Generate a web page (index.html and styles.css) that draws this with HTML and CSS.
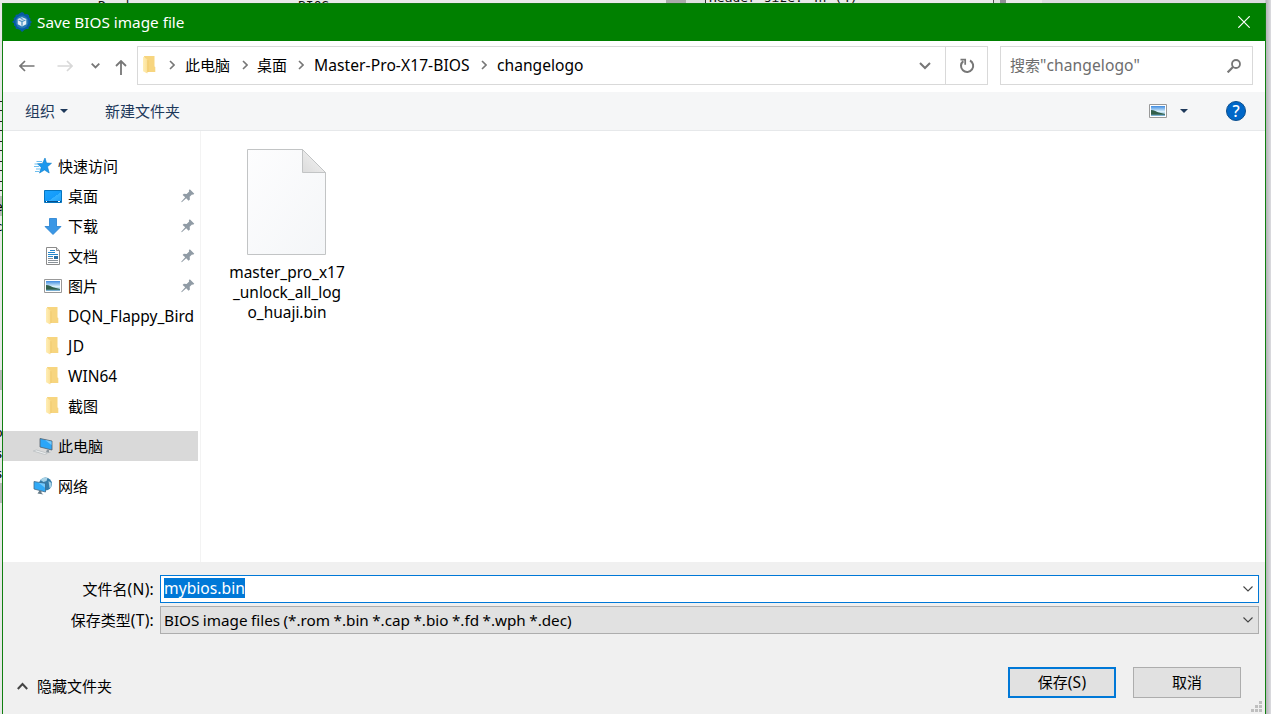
FILE: index.html
```html
<!DOCTYPE html>
<html lang="zh-CN">
<head>
<meta charset="utf-8">
<title>Save BIOS image file</title>
<link rel="stylesheet" href="styles.css">
</head>
<body>
<svg class="defs" width="0" height="0">
  <defs>
    <linearGradient id="foldg" x1="0" x2="1" y1="0" y2="0"><stop offset="0" stop-color="#ffeeb5"/><stop offset="1" stop-color="#fbe098"/></linearGradient>
    <linearGradient id="sky" x1="0" x2="0" y1="0" y2="1"><stop offset="0" stop-color="#3f8be0"/><stop offset=".55" stop-color="#d9f0fb"/><stop offset="1" stop-color="#6fa9cf"/></linearGradient>
    <linearGradient id="scr" x1="0" x2="1" y1="0" y2="1"><stop offset="0" stop-color="#1ea5ff"/><stop offset=".55" stop-color="#139bfa"/><stop offset=".56" stop-color="#35b2ff"/><stop offset="1" stop-color="#169cf8"/></linearGradient>
    <linearGradient id="page" x1="0" x2="1" y1="0" y2="1"><stop offset="0" stop-color="#fdfdfe"/><stop offset="1" stop-color="#f4f6f8"/></linearGradient>
    <linearGradient id="curl" x1="0" x2="1" y1="1" y2="0"><stop offset="0" stop-color="#dcdcdc"/><stop offset="1" stop-color="#f5f5f5"/></linearGradient>
    <symbol id="folder" viewBox="0 0 13 18"><path fill="#f7d57f" d="M1 0h10.500v10.500l.8.500v5H4z"/><path fill="#eec765" d="M4.300 4v12.500l1-.5V4.500z"/><path fill="url(#foldg)" d="M0 .8 4.300 3.300V17.500L0 15.200z"/></symbol>
    <symbol id="picture" viewBox="0 0 18 14"><path fill="#fff" stroke="#999" d="M.5.5h17v13H.5z"/><path fill="url(#sky)" d="M2 2h14v10H2z"/><path fill="#315f4b" d="M2 6c3 0 6 2 8 2.500l6 1.500v.800H2z"/></symbol>
    <symbol id="pin" viewBox="0 0 14 14"><path fill="#909ba5" d="M8.800.3 13.300 4.800l-1.300.9-1-.3-2.300 2.400.2 2.700-1.300 1.300L5.200 9.300.8 13.300.2 12.800 4.200 8.200 1.600 5.900l1.300-1.200 2.700.2L8.200 2.600l-.4-1.100z"/></symbol>
    <symbol id="crumb" viewBox="0 0 6 10"><path fill="none" stroke="#777" stroke-width="1.600" d="m1 1 4 4-4 4"/></symbol>
  </defs>
</svg>
<div class="behind">
  <div class="behind-top">
    <span class="peek peek-a">Read</span><span class="peek peek-b">BIOS</span>
    <span class="peek-pane"></span><span class="peek peek-c">Header size: 4h (4)</span><span class="peek-bar"></span>
  </div>
  <div class="behind-left"><i class="edge e1"></i><i class="edge e2"></i><i class="edge e3"></i><i class="edge e4"></i><i class="edge e5"></i><b class="block b1"></b><b class="block b2"></b><b class="block b3"></b>
    <span class="bit t1">e</span><span class="bit t2">c</span><span class="bit t3">o</span><span class="bit t4">s</span><span class="bit t5">s</span></div>
</div>
<main class="dialog">
  <header class="titlebar">
    <svg class="app-icon" width="20" height="20" viewBox="0 0 20 20"><path fill="#065aa5" d="m8 1 2-1 2 1 .6 1.600L15 2l2 1.200.2 2.300 1.300 1-.3 2L20 10l-1.700 1.500.3 2.200-1.800 1-.3 2.200-2.300.1-1.500.8L10 20l-1.800-1.900-2-.8-2.400-.5-.3-2.300-1.600-1 .3-2L0 10l2-1.700-.4-2.200L3.300 5 3.800 2.700 6 2.500z"/><circle cx="10" cy="10" r="6.500" fill="#2478b4"/><path fill="#e6f0f7" d="m10 5.200 4.300 1.800v5.300L10 14.500l-4.300-2.200V7z"/><path fill="none" stroke="#4e94c4" stroke-width="1.300" d="m6.500 8 3.500 1.500L13.500 8M10 9.500v4.300M8.500 6.300l3 1.200"/></svg>
    <h1>Save BIOS image file</h1>
    <svg class="close" width="12" height="12" viewBox="0 0 12 12"><path stroke="#fff" stroke-width="1.200" d="m.3.3 11.400 11.400M11.700.3.3 11.700"/></svg>
  </header>
  <nav class="navbar">
    <div class="history">
      <svg width="16" height="12" viewBox="0 0 16 12"><path fill="none" stroke="#777" stroke-width="1.700" d="M15.500 6H1m5-5L1 6l5 5"/></svg>
      <svg width="16" height="12" viewBox="0 0 16 12"><path fill="none" stroke="#d8d8d8" stroke-width="1.700" d="M.5 6H15m-5-5 5 5-5 5"/></svg>
      <svg width="9" height="6" viewBox="0 0 9 6"><path fill="none" stroke="#777" stroke-width="1.800" d="m.7.7 3.800 3.800L8.300.7"/></svg>
      <svg class="up" width="12" height="15" viewBox="0 0 12 15"><path fill="none" stroke="#777" stroke-width="1.800" d="M6 15V1M1 6l5-5 5 5"/></svg>
    </div>
    <div class="address">
      <svg class="addr-folder" width="13" height="18"><use href="#folder"/></svg>
      <svg class="crumb c1" width="6" height="10"><use href="#crumb"/></svg><span class="up1">此电脑</span>
      <svg class="crumb" width="6" height="10"><use href="#crumb"/></svg><span class="up1">桌面</span>
      <svg class="crumb c3" width="6" height="10"><use href="#crumb"/></svg><span class="latin w-master up1">Master-Pro-X17-BIOS</span>
      <svg class="crumb c4" width="6" height="10"><use href="#crumb"/></svg><span class="latin up1">changelogo</span>
      <svg class="drop" width="12" height="8" viewBox="0 0 12 8"><path fill="none" stroke="#777" stroke-width="2" d="m1 1 5 5 5-5"/></svg>
      <div class="refresh"><svg width="16" height="16" viewBox="0 0 16 16"><path fill="none" stroke="#777" stroke-width="2" d="M11 2.500A6.100 6.100 0 1 1 4.300 3.100"/><path fill="none" stroke="#777" stroke-width="1.700" d="M1.500 1.700h4.700v5"/></svg></div>
    </div>
    <div class="search"><span class="up1">搜索<span class="latin w-search">"changelogo"</span></span>
      <svg width="14" height="14" viewBox="0 0 14 14"><circle cx="9" cy="5" r="4" fill="none" stroke="#777" stroke-width="1.800"/><path stroke="#777" stroke-width="2.200" d="m6 8-5.400 5.400"/></svg></div>
  </nav>
  <div class="toolbar">
    <span>组织</span><i class="tri"></i><span class="newdir">新建文件夹</span>
    <svg class="view" width="18" height="14"><use href="#picture"/></svg><i class="tri tri-view"></i><b class="help">?</b>
  </div>
  <section class="content">
    <aside class="sidebar">
      <div class="row root"><svg width="18" height="16" viewBox="0 0 18 16"><path fill="#1b98ee" stroke="#0b7cc8" stroke-width=".6" d="m11 0 1.500 5 5 .3-4 3.400 1.700 6.300L10.500 12 5.500 15l1.700-5.500L3.500 5.700l5-.3z"/><path stroke="#4aaeea" stroke-width=".8" d="M2.500 3.500H8M.5 6h4M0 8.500h5M2 11h4M1 13.500h4"/></svg><span>快速访问</span></div>
      <div class="row"><svg width="18" height="13" viewBox="0 0 18 13"><path fill="url(#scr)" stroke="#0675bf" d="M.5.5h17v12H.5z"/><path stroke="#064f8c" d="M1 11.500h16"/><path stroke="#fff" d="M2 11.500h1M14 11.500h2"/></svg><span>桌面</span><svg class="pin" width="14" height="14"><use href="#pin"/></svg></div>
      <div class="row"><svg width="18" height="17" viewBox="0 0 18 17"><path fill="#3b97e5" stroke="#227dcf" stroke-width=".8" d="M5.500.5h7v8H17L9 16.500 1 8.500h4.500z"/></svg><span>下载</span><svg class="pin" width="14" height="14"><use href="#pin"/></svg></div>
      <div class="row"><svg width="18" height="18" viewBox="0 0 18 18"><path fill="#fff" stroke="#8b8b8b" d="M2.500.5h10l3 3v14h-13z"/><path fill="#e4e4e4" stroke="#8b8b8b" d="M12.500.5v3h3"/><path stroke="#2588cc" d="M6 3.500h5M4 5.500h7M4 7.500h10M4 9.500h5"/><path stroke="#8a9299" d="M4 11.500h5M4 13.500h10M4 15.500h10"/><path fill="#276fa2" d="M10 9h4v3h-4z"/></svg><span>文档</span><svg class="pin" width="14" height="14"><use href="#pin"/></svg></div>
      <div class="row"><svg width="18" height="14"><use href="#picture"/></svg><span>图片</span><svg class="pin" width="14" height="14"><use href="#pin"/></svg></div>
      <div class="row"><svg class="dir" width="13" height="18"><use href="#folder"/></svg><span class="latin side">DQN_Flappy_Bird</span></div>
      <div class="row"><svg class="dir" width="13" height="18"><use href="#folder"/></svg><span class="latin w-jd">JD</span></div>
      <div class="row"><svg class="dir" width="13" height="18"><use href="#folder"/></svg><span class="latin side">WIN64</span></div>
      <div class="row"><svg class="dir" width="13" height="18"><use href="#folder"/></svg><span>截图</span></div>
      <div class="row root selected"><svg width="20" height="18" viewBox="0 0 20 18"><path fill="#2ca6f8" stroke="#53616c" stroke-width=".8" d="m7 1.500 12 2.500v9L7 10z"/><path fill="#74c8fa" d="m12 3 6.500 1.400V8z"/><path fill="#8b959c" d="m14 12.500 2 .5v2.300l2 .7-5-.7z"/><path fill="#eef0f1" stroke="#b4babd" stroke-width=".7" d="m.3 14 3-1 11 3.300-2.500 1.200z"/></svg><span>此电脑</span></div>
      <div class="row root"><svg width="19" height="18" viewBox="0 0 19 18"><circle cx="12" cy="7" r="6.500" fill="#347ca8"/><path fill="#a8d3e7" d="M7 3c2-3 5-3 7-2l-1 3-3 1zM15 4l3 2v4l-2 1z"/><path fill="#31aaf7" stroke="#426b88" stroke-width=".8" d="m.5 4.500 11.500 2V15l-11.500-3z"/><path fill="#75c9fa" d="m5 5.700 6.500 1.100v4z"/><path fill="#667b88" d="m6 13.500 2 .5v2l2 1.500-6-1z"/></svg><span>网络</span></div>
    </aside>
    <div class="files">
      <figure class="file">
        <svg width="80" height="107" viewBox="0 0 80 107"><path fill="url(#page)" stroke="#c2c4c5" d="M.5.5h55l23 23v82H.5z"/><path fill="url(#curl)" stroke="#c2c4c5" d="M55.500.5v23h23z"/></svg>
        <figcaption><span>master_pro_x17</span><br><span>_unlock_all_log</span><br><span>o_huaji.bin</span></figcaption>
      </figure>
    </div>
  </section>
  <footer class="bottom">
    <div class="field"><label>文件名<span class="latin paren">(N):</span></label><div class="combo active"><span class="latin marked">mybios.bin</span><svg width="10" height="6" viewBox="0 0 10 6"><path fill="none" stroke="#444" stroke-width="1.100" d="m.5.5 4.500 4.500L9.500.5"/></svg></div></div>
    <div class="field"><label>保存类型<span class="latin paren">(T):</span></label><div class="combo"><span class="w-types">BIOS image files (*.rom *.bin *.cap *.bio *.fd *.wph *.dec)</span><svg width="10" height="6" viewBox="0 0 10 6"><path fill="none" stroke="#444" stroke-width="1.100" d="m.5.5 4.500 4.500L9.500.5"/></svg></div></div>
    <div class="actions">
      <svg width="11" height="8" viewBox="0 0 11 8"><path fill="none" stroke="#444" stroke-width="2" d="m.8 7 4.700-5 4.700 5"/></svg><span class="hide">隐藏文件夹</span>
      <button class="btn primary">保存<span class="latin paren">(S)</span></button><button class="btn">取消</button>
    </div>
    <svg class="grip" width="11" height="11" viewBox="0 0 11 11"><path fill="#bfbfbf" d="M8 0h3v3H8zM4 4h3v3H4zM8 4h3v3H8zM0 8h3v3H0zM4 8h3v3H4zM8 8h3v3H8z"/></svg>
  </footer>
</main>
</body>
</html>
```
FILE: styles.css
```css
* { box-sizing: border-box; }
body { margin: 0; width: 1271px; height: 714px; overflow: hidden; position: relative; background: #dcdce0; font: 15px/20px "Noto Sans", "Noto Sans CJK SC", sans-serif; color: #000; }
svg { display: block; flex: none; }
.defs { position: absolute; }
span { white-space: nowrap; }
.latin { font-size: 15.6px; }
.up1 { margin-bottom: 2px; }

/* Slivers of the application window behind the dialog */
.behind { position: absolute; inset: 0; background: linear-gradient(90deg, #dcdce0 1265px, #b4b4b8 1266px, #dcdce0 1271px); }
.behind-top { position: absolute; left: 0; top: 0; width: 1042px; height: 3px; overflow: hidden; background: #e9e9e9; }
.peek { position: absolute; top: -2px; font: 13px/16px "DejaVu Sans Mono", monospace; color: #111; }
.peek-a { left: 98px; }
.peek-b { left: 298px; }
.peek-c { left: 709px; top: -10px; }
.peek-pane { position: absolute; left: 666px; top: 0; width: 40px; height: 3px; background: linear-gradient(90deg, #aaa 20px, #e0e0e0 20px, #e0e0e0 39px, #333 39px); }
.peek-bar { position: absolute; left: 993px; top: 0; width: 13px; height: 3px; background: linear-gradient(90deg, #555 1px, #e0e0e0 1px, #e0e0e0 7px, #909096 7px); }
.behind-left { position: absolute; left: 0; top: 3px; width: 2px; height: 711px; overflow: hidden; background: #e8e8e8; }
.edge { position: absolute; left: 0; width: 2px; height: 10px; border: solid #222; border-width: 1px 0; }
.e1 { top: 98px; } .e2 { top: 118px; } .e3 { top: 138px; } .e4 { top: 158px; } .e5 { top: 178px; }
.block { position: absolute; left: 0; width: 2px; height: 20px; background: #b8b8b8; }
.b1 { top: 193px; } .b2 { top: 367px; } .b3 { top: 480px; }
.bit { position: absolute; left: -5px; font: 13px/16px "DejaVu Sans Mono", monospace; }
.t1 { top: 196px; } .t2 { top: 216px; } .t3 { top: 422px; } .t4 { top: 443px; } .t5 { top: 463px; }

.dialog { position: absolute; left: 2px; top: 3px; width: 1264px; height: 711px; border: solid #118011; border-width: 0 1px; background: #fff; display: flex; flex-direction: column; }
.titlebar { height: 38px; flex: none; display: flex; align-items: center; padding: 0 15px 1px 9px; background: #008000; color: #fff; border-top: 1px solid #127a12; }
h1 { margin: 0 auto 0 5px; font-size: 15.3px; font-weight: 400; line-height: 20px; }
.navbar { height: 51px; flex: none; display: flex; padding: 5px 12px 7px 16px; }
.history { width: 118px; display: flex; align-items: center; height: 40px; gap: 22px; }
.history svg:nth-child(3) { margin-left: -4px; }
.history .up { margin-left: -7px; margin-top: 2px; }
.address { height: 39px; width: 851px; border: 1px solid #d9d9d9; display: flex; align-items: center; padding-left: 5px; }
.addr-folder { margin-top: -1px; }
.crumb { margin: 0 9px 2px 12px; }
.c1 { margin-left: 13px; margin-right: 10px; }
.c3 { margin-left: 11px; margin-right: 10px; }
.c4 { margin-left: 11px; margin-right: 10px; }
.w-master { width: 156px; letter-spacing: .06px; }
.w-search { letter-spacing: .08px; }
.drop { margin-left: auto; margin-right: 14px; }
.refresh { width: 42px; height: 37px; border-left: 1px solid #d9d9d9; display: flex; align-items: center; justify-content: center; }
.search { margin-left: 12px; width: 253px; height: 39px; border: 1px solid #d9d9d9; display: flex; align-items: center; justify-content: space-between; padding: 0 11px 0 9px; color: #6d6d6d; }
.toolbar { height: 39px; flex: none; display: flex; align-items: center; background: #f5f6f7; border-bottom: 1px solid #e6e8ea; padding: 0 19px 0 22px; color: #1e395b; }
.tri { border: 4px solid transparent; border-top: 4px solid #1e395b; border-bottom: 0; margin-left: 5px; }
.newdir { margin-left: 37px; }
.view { margin-left: auto; }
.tri-view { margin-left: 13px; }
.help { width: 20px; height: 20px; margin-left: 38px; border-radius: 50%; background: #0067c8; border: 1px solid #0b4f8e; color: #fff; font-size: 16px; line-height: 18px; text-align: center; font-weight: 500; }

.content { height: 431px; flex: none; display: flex; }
.sidebar { width: 198px; border-right: 1px solid #f3f3f3; padding-top: 20px; }
.row { height: 30px; display: flex; align-items: center; padding-left: 41px; }
.row span { margin-left: 6px; }
.row .dir { margin: 0 3px 0 2px; }
.side { font-size: 15.5px; }
.w-jd { letter-spacing: .4px; }
.pin { margin-left: auto; margin-right: 5px; }
.root { padding-left: 30px; width: 195px; }
.root svg { width: 20px; }
.root span { margin-left: 5px; }
.root.selected { background: #d9d9d9; }
.selected, .selected + .root { margin-top: 10px; }
.file { margin: 18px 0 0 21px; width: 130px; display: flex; flex-direction: column; align-items: center; text-align: center; }
figcaption { margin-top: 6px; font-size: 15.45px; line-height: 20px; }

.bottom { position: relative; flex: 1; background: #f0f0f0; padding: 13px 6px 0 0; }
.field { display: flex; align-items: center; height: 28px; margin-bottom: 3px; }
.field label { width: 151px; text-align: right; margin-right: 6px; white-space: nowrap; }
.paren { letter-spacing: .25px; }
.combo { flex: 1; height: 28px; border: 1px solid #adadad; background: #e1e1e1; display: flex; align-items: center; justify-content: space-between; padding: 0 5px 0 3px; }
.combo.active { background: #fff; border-color: #0078d7; }
.marked { background: #0078d7; color: #fff; margin-bottom: 2px; letter-spacing: .05px; }
.w-types { font-size: 15.25px; word-spacing: -.5px; }
.actions { display: flex; align-items: center; margin: 33px 18px 0 14px; height: 31px; }
.hide { margin: 6px auto 0 9px; }
.actions > svg { margin-top: 7px; }
.btn { width: 108px; height: 31px; border: 1px solid #adadad; background: #e1e1e1; font: inherit; color: #000; padding: 0 0 2px; margin-left: 17px; }
.btn.primary { border: 2px solid #0078d7; }
.grip { position: absolute; right: 3px; bottom: 2px; }
```
